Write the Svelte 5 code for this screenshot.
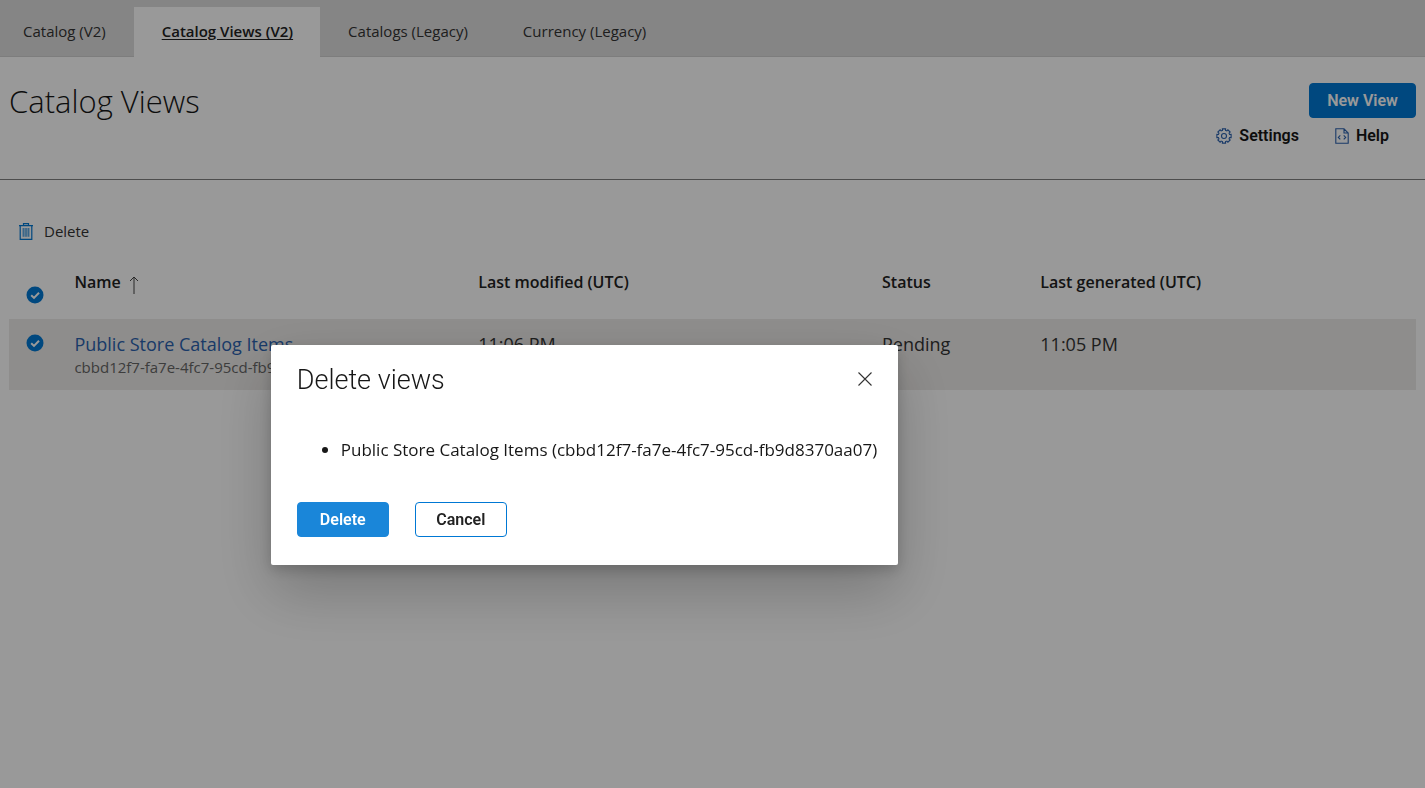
<script>
  const tabs = ['Catalog (V2)', 'Catalog Views (V2)', 'Catalogs (Legacy)', 'Currency (Legacy)'];
  const activeTab = 'Catalog Views (V2)';

  const views = [
    {
      name: 'Public Store Catalog Items',
      id: 'cbbd12f7-fa7e-4fc7-95cd-fb9d8370aa07',
      modified: '11:06 PM',
      status: 'Pending',
      generated: '11:05 PM'
    }
  ];

  // Outline of a cog with eight teeth, centred on 8,8.
  const teeth = 8;
  const cog = Array.from({ length: teeth }, (_, i) => {
    const step = (Math.PI * 2) / teeth;
    return [
      [-0.34, 5.8],
      [-0.28, 7.3],
      [0.28, 7.3],
      [0.34, 5.8]
    ]
      .map(([offset, r]) => {
        const a = i * step + offset * step;
        return `${(8 + r * Math.cos(a)).toFixed(2)} ${(8 + r * Math.sin(a)).toFixed(2)}`;
      })
      .join('L');
  }).join('L');
</script>

{#snippet tick(label)}
  <label class="tick">
    <input type="checkbox" checked aria-label={label} />
    <svg viewBox="0 0 18 18" width="18" height="18" aria-hidden="true">
      <circle cx="9" cy="9" r="8.5" />
      <path d="M5.2 9.2 8 11.9 13 6.7" />
    </svg>
  </label>
{/snippet}

<div class="page">
  <nav class="tabs">
    {#each tabs as tab}
      <a href="#top" class:active={tab === activeTab}>{tab}</a>
    {/each}
  </nav>

  <header>
    <h1>Catalog Views</h1>
    <div class="actions">
      <button class="btn primary new" type="button">New View</button>
      <div class="links">
        <a href="#settings">
          <svg viewBox="0 0 16 16" width="16" height="16" aria-hidden="true">
            <path d="M{cog}Z" />
            <circle cx="8" cy="8" r="2.5" />
          </svg>
          Settings
        </a>
        <a href="#help">
          <svg viewBox="0 0 14 16" width="14" height="16" aria-hidden="true">
            <path d="M.8.8H9l4.2 4.2v10.2H.8ZM9 .8V5h4.2M5.3 7.4 3.3 9.4l2 2M8.7 7.4l2 2-2 2" />
          </svg>
          Help
        </a>
      </div>
    </div>
  </header>

  <main>
    <button class="command" type="button">
      <svg viewBox="0 0 14 17" width="14" height="17" aria-hidden="true">
        <path d="M0 2.7h14M4.5 2.5V.7h5v1.8M1.2 2.7v13.6h11.6V2.7" />
        <path class="thin" d="M4.2 5v8.8M6.1 5v8.8M7.9 5v8.8M9.8 5v8.8" />
      </svg>
      Delete
    </button>

    <table>
      <thead>
        <tr>
          <th class="check">{@render tick('Select all views')}</th>
          <th class="name">
            <span class="sort">
              Name
              <svg viewBox="0 0 10 18" width="10" height="18" aria-hidden="true">
                <path d="M5 18V1M1 5l4-4 4 4" />
              </svg>
            </span>
          </th>
          <th class="modified">Last modified (UTC)</th>
          <th class="status">Status</th>
          <th>Last generated (UTC)</th>
        </tr>
      </thead>
      <tbody>
        {#each views as view}
          <tr>
            <td class="check">{@render tick(`Select ${view.name}`)}</td>
            <td>
              <a href="#view">{view.name}</a>
              <small>{view.id}</small>
            </td>
            <td>{view.modified}</td>
            <td>{view.status}</td>
            <td>{view.generated}</td>
          </tr>
        {/each}
      </tbody>
    </table>
  </main>
</div>

<div class="overlay">
  <div class="dialog" role="dialog" aria-modal="true" aria-labelledby="dialog-title">
    <div class="title">
      <h2 id="dialog-title">Delete views</h2>
      <button class="close" type="button" aria-label="Close">
        <svg viewBox="0 0 14 14" width="14" height="14" aria-hidden="true">
          <path d="M.5.5l13 13M13.5.5l-13 13" />
        </svg>
      </button>
    </div>
    <ul>
      {#each views as view}
        <li>{view.name} ({view.id})</li>
      {/each}
    </ul>
    <div class="buttons">
      <button class="btn primary light" type="button">Delete</button>
      <button class="btn" type="button">Cancel</button>
    </div>
  </div>
</div>

<style>
  :global(body) {
    margin: 0;
    background: #fff;
    color: #333;
    font-family: 'Open Sans', 'Noto Sans', sans-serif;
  }

  svg {
    display: block;
    flex: none;
    fill: none;
  }

  a {
    text-decoration: none;
  }

  button {
    font: inherit;
    cursor: pointer;
  }

  .page {
    min-height: 100vh;
  }

  .tabs {
    display: flex;
    align-items: flex-end;
    height: 56px;
    background: #dedede;
    border-bottom: 1px solid #d0d0d0;
  }

  .tabs a {
    padding: 0 27px 0 28px;
    color: #333;
    font-size: 15px;
    line-height: 50px;
  }

  .tabs a:first-child {
    padding: 0 28px 0 23px;
  }

  .tabs a.active {
    margin-bottom: -1px;
    padding-bottom: 2px;
    background: #fff;
    color: #222;
    font-weight: 600;
    line-height: 48px;
    text-decoration: underline;
    text-underline-offset: 2px;
  }

  header {
    display: flex;
    justify-content: space-between;
    align-items: flex-start;
    padding: 26px 9px 32px;
    border-bottom: 1px solid #808080;
  }

  h1 {
    margin: 0;
    color: #171717;
    font-size: 31px;
    font-weight: 300;
    line-height: 36px;
  }

  .actions {
    display: flex;
    flex-direction: column;
    align-items: flex-end;
    gap: 7px;
  }

  .btn {
    box-sizing: border-box;
    min-width: 92px;
    height: 35px;
    padding: 0 17px;
    border: 1px solid #0078d4;
    border-radius: 4px;
    background: #fff;
    color: #222;
    font-family: Roboto, 'Liberation Sans', sans-serif;
    font-size: 16px;
    font-weight: 600;
  }

  .primary {
    background: #0078d4;
    color: #fff;
  }

  .new {
    min-width: 107px;
  }

  .light {
    border-color: #1a86d9;
    background: #1a86d9;
  }

  .links {
    display: flex;
    gap: 36px;
    padding-right: 27px;
  }

  .links a {
    display: flex;
    align-items: center;
    gap: 7px;
    color: #171717;
    font-family: Roboto, 'Liberation Sans', sans-serif;
    font-size: 16px;
    font-weight: 600;
    line-height: 22px;
  }

  .links svg {
    stroke: #2b62ae;
    stroke-width: 1.1;
  }

  main {
    padding: 36px 9px;
  }

  .command {
    display: flex;
    align-items: center;
    gap: 11px;
    padding: 0 10px;
    border: 0;
    background: none;
    color: #333;
    font-size: 15px;
    line-height: 30px;
  }

  .command svg {
    stroke: #0078d4;
    stroke-width: 1.2;
  }

  .command .thin {
    stroke-width: 0.9;
  }

  table {
    width: 100%;
    margin-top: 12px;
    border-collapse: collapse;
    table-layout: fixed;
  }

  th,
  td {
    padding: 0;
    text-align: left;
    vertical-align: top;
  }

  th {
    height: 61px;
    color: #222;
    font-size: 16px;
    font-weight: 600;
    line-height: 48px;
  }

  td {
    height: 58px;
    padding-top: 13px;
    background: #edebe9;
    font-size: 18px;
    line-height: 24px;
  }

  th.check {
    width: 4.65%;
    vertical-align: bottom;
  }

  td.check {
    padding-top: 12px;
  }

  .name,
  .modified {
    width: 28.7%;
  }

  .status {
    width: 11.25%;
  }

  .sort {
    display: flex;
    align-items: center;
    gap: 8px;
  }

  .sort svg {
    margin-top: 5px;
    stroke: #444;
  }

  td a {
    display: block;
    color: #2b62ae;
  }

  small {
    display: block;
    color: #666;
    font-size: 15px;
    line-height: 22px;
  }

  .tick {
    display: grid;
    width: 18px;
    padding: 3px 17px;
  }

  th .tick {
    padding-bottom: 15px;
  }

  .tick input,
  .tick svg {
    grid-area: 1 / 1;
    width: 18px;
    height: 18px;
    margin: 0;
  }

  .tick input {
    appearance: none;
  }

  .tick svg {
    pointer-events: none;
  }

  .tick circle {
    fill: #0078d4;
  }

  .tick path {
    stroke: #fff;
    stroke-width: 2;
  }

  .overlay {
    position: fixed;
    inset: 0;
    padding: 345px 19% 0;
    background: rgb(0 0 0 / 40%);
  }

  .dialog {
    box-sizing: border-box;
    width: max-content;
    padding: 16px 26px 28px;
    border-radius: 2px;
    background: #fff;
    box-shadow:
      0 26px 58px rgb(0 0 0 / 22%),
      0 5px 14px rgb(0 0 0 / 18%);
    color: #171717;
  }

  .title {
    display: flex;
    justify-content: space-between;
    align-items: center;
  }

  h2 {
    margin: 0;
    font-family: Roboto, 'Liberation Sans', sans-serif;
    font-size: 27px;
    font-weight: 300;
    line-height: 38px;
  }

  .close {
    padding: 0 0 2px;
    border: 0;
    background: none;
  }

  .close svg {
    stroke: #333;
    stroke-width: 1.1;
  }

  ul {
    margin: 38px -5px 40px 0;
    padding-left: 44px;
    font-size: 17px;
    line-height: 25px;
  }

  .buttons {
    display: flex;
    gap: 26px;
  }
</style>
